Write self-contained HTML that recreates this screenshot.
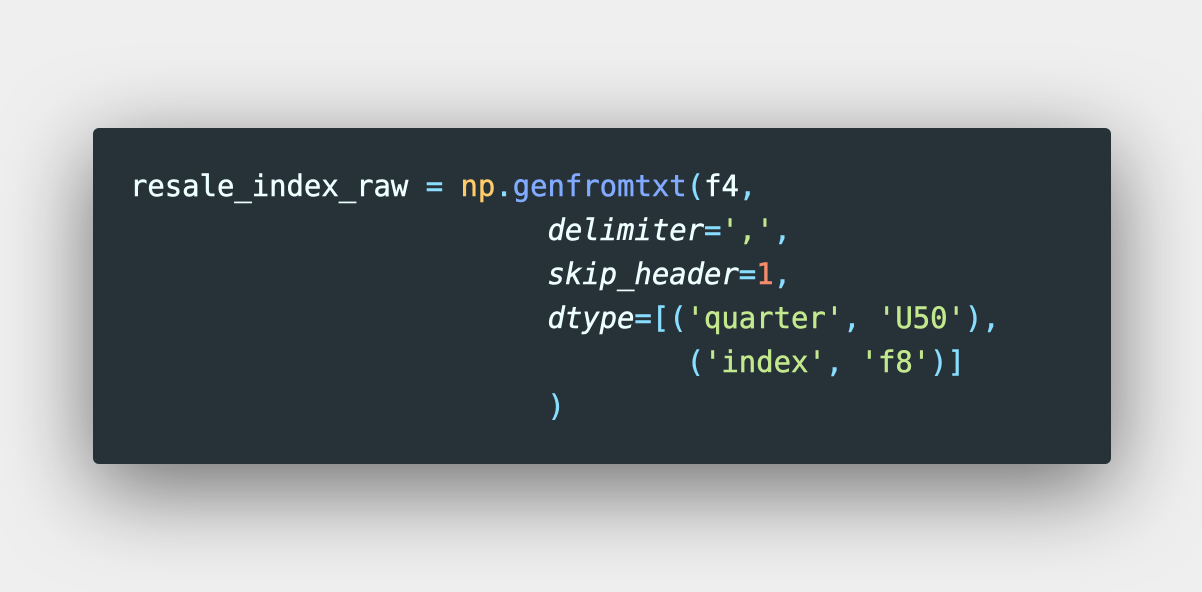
<!DOCTYPE html>
<html><head><style>
html,body{margin:0;padding:0;width:1202px;height:592px;background:#efefef;overflow:hidden}
.card{position:absolute;left:93px;top:128px;width:1018px;height:336px;background:#263238;border-radius:6px;box-shadow:0 24px 90px rgba(0,0,0,0.55)}
pre{position:absolute;left:37px;top:36px;margin:0;font-family:"DejaVu Sans Mono","Liberation Mono",monospace;font-size:28.9px;line-height:44px;color:#EEFFFF;-webkit-text-stroke:0.5px currentColor}
.o{color:#89DDFF}.y{color:#FFCB6B}.b{color:#82AAFF}.s{color:#C3E88D}.n{color:#F78C6C}.i{font-style:italic}
</style></head><body>
<div class="card"><pre>resale_index_raw <span class="o">=</span> <span class="y">np</span><span class="o">.</span><span class="b">genfromtxt</span><span class="o">(</span>f4<span class="o">,</span>
                        <span class="i">delimiter</span><span class="o">=</span><span class="s">','</span><span class="o">,</span>
                        <span class="i">skip_header</span><span class="o">=</span><span class="n">1</span><span class="o">,</span>
                        <span class="i">dtype</span><span class="o">=[(</span><span class="s">'quarter'</span><span class="o">,</span> <span class="s">'U50'</span><span class="o">),</span>
                                <span class="o">(</span><span class="s">'index'</span><span class="o">,</span> <span class="s">'f8'</span><span class="o">)]</span>
                        <span class="o">)</span></pre></div>
</body></html>
